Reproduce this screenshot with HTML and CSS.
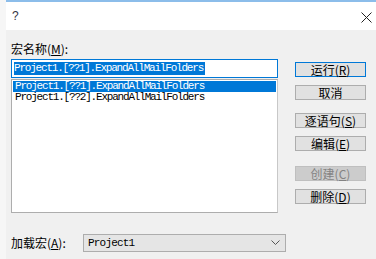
FILE: index.html
```html
<!DOCTYPE html>
<html lang="zh-CN">
<head>
    <meta charset="UTF-8">
    <title>宏</title>
    <link rel="stylesheet" href="styles.css">
</head>
<body>
    <div class="strip"></div>
    <div class="window">
        <div class="titlebar">
            <span class="title">?</span>
            <svg class="close" width="11" height="11" viewBox="0 0 11 11">
                <path d="M0.5 0.5 L10.5 10.5 M10.5 0.5 L0.5 10.5" stroke="#222" stroke-width="1" fill="none"/>
            </svg>
        </div>
        <div class="content">
            <div class="main">
                <div class="left">
                    <div class="label">宏名称(<u>M</u>):</div>
                    <div class="name-input"><span class="sel">Project1.[??1].ExpandAllMailFolders</span></div>
                    <div class="list">
                        <div class="item active">Project1.[??1].ExpandAllMailFolders</div>
                        <div class="item">Project1.[??2].ExpandAllMailFolders</div>
                    </div>
                </div>
                <div class="buttons">
                    <div class="btn default">运行(<u>R</u>)</div>
                    <div class="btn">取消</div>
                    <div class="btn gap">逐语句(<u>S</u>)</div>
                    <div class="btn">编辑(<u>E</u>)</div>
                    <div class="btn gap2 disabled">创建(<u>C</u>)</div>
                    <div class="btn">删除(<u>D</u>)</div>
                </div>
            </div>
            <div class="bottom">
                <div class="label">加载宏(<u>A</u>):</div>
                <div class="select">
                    <span>Project1</span>
                    <svg width="9" height="6" viewBox="0 0 9 6">
                        <path d="M0.5 0.5 L4.5 4.5 L8.5 0.5" stroke="#555" stroke-width="1" fill="none"/>
                    </svg>
                </div>
            </div>
        </div>
    </div>
</body>
</html>
```

FILE: styles.css
```css
body {
    margin: 0;
    height: 259px;
    display: flex;
    background: #f0f0f0;
    font-family: "Noto Sans CJK SC", "Liberation Sans", sans-serif;
    font-size: 12px;
    color: #000;
    overflow: hidden;
}
.strip {
    width: 6px;
    background: #f6f6f6;
}
.window {
    flex: 1;
    display: flex;
    flex-direction: column;
}
.titlebar {
    height: 28px;
    background: #fff;
    border-top: 2px solid #8cbdea;
    display: flex;
    align-items: center;
    justify-content: space-between;
    padding: 0 4px 0 6px;
}
.title {
    font-family: "Liberation Sans", sans-serif;
    font-size: 12px;
    color: #334;
}
.close {
    margin-top: 2px;
}
.content {
    padding: 11px 0 0 5px;
}
.main {
    display: flex;
}
.left {
    width: 267px;
}
.label {
    height: 16px;
    line-height: 16px;
    font-size: 12px;
}
.label u, .btn u {
    text-decoration: underline;
}
.name-input {
    margin-top: 2px;
    height: 17px;
    border: 1px solid #0078d7;
    background: #fff;
    display: flex;
    align-items: center;
    padding-left: 2px;
}
.sel, .item, .select span {
    font-family: "Liberation Mono", monospace;
    font-size: 11px;
    letter-spacing: -1.2px;
}
.sel {
    background: #0078d7;
    color: #fff;
    line-height: 13px;
    padding-right: 2px;
}
.list {
    margin-top: 1px;
    height: 130px;
    border: 1px solid #adadad;
    border-right-color: #c8c8c8;
    background: #fff;
    padding: 1px;
    box-sizing: content-box;
    width: 263px;
}
.item {
    height: 11px;
    line-height: 11px;
    padding-left: 2px;
}
.item.active {
    background: #0078d7;
    color: #fff;
}
.buttons {
    margin-left: 17px;
    padding-top: 21px;
    width: 71px;
    display: flex;
    flex-direction: column;
}
.btn {
    height: 13px;
    line-height: 13px;
    border: 1px solid #adadad;
    background: #e1e1e1;
    text-align: center;
    font-size: 12px;
    margin-bottom: 8px;
}
.btn.default {
    border-color: #0078d7;
}
.btn.gap {
    margin-top: 5px;
}
.btn.gap2 {
    margin-top: 7px;
}
.btn.disabled {
    background: #cccccc;
    border-color: #bfbfbf;
    color: #838383;
}
.bottom {
    display: flex;
    align-items: center;
    margin-top: 21px;
}
.bottom .label {
    width: 72px;
}
.select {
    width: 192px;
    height: 16px;
    border: 1px solid #adadad;
    background: #e5e5e5;
    display: flex;
    align-items: center;
    justify-content: space-between;
    padding: 0 5px 0 4px;
    box-sizing: content-box;
}
.select span {
    letter-spacing: -0.8px;
}
```
